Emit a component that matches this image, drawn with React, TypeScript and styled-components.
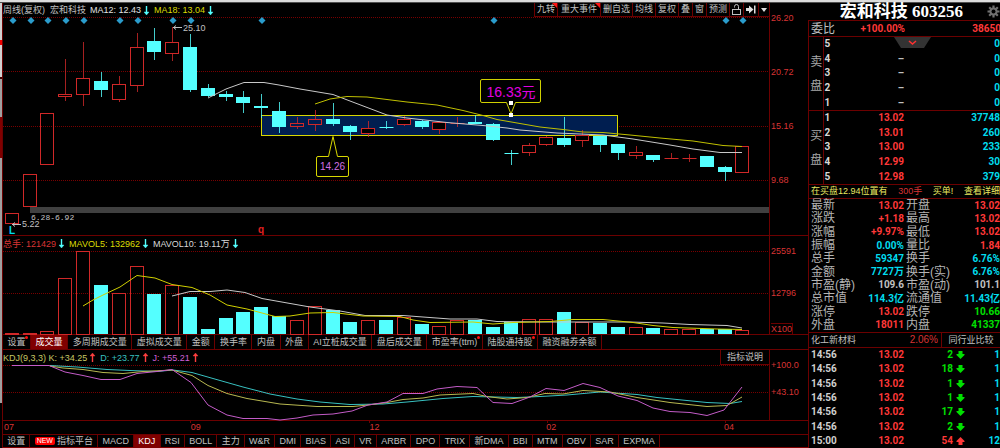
import React from "react";
import styled, { createGlobalStyle, css } from "styled-components";

const LINE = "#6c0000";
const RED = "#d83434";
const HOT = "#ff3838";
const CYAN = "#54ffff";
const AQUA = "#00dcee";
const GREEN = "#00e000";
const GREY = "#c0c0c0";
const YELLOW = "#dcdc00";

const SANS = `"Liberation Sans", "Noto Sans CJK SC", sans-serif`;
const DIGITS = `Roboto, "Noto Sans CJK SC", sans-serif`;

const GlobalStyle = createGlobalStyle`
  * { box-sizing: border-box; }
  body { margin: 0; background: #000; }
  button { font: inherit; color: inherit; margin: 0; border: 0; background: none; cursor: pointer; }
  table { border-collapse: collapse; width: 100%; }
  th, td { padding: 0; font-weight: inherit; }
`;

const Page = styled.div`
  display: flex;
  flex-direction: column;
  min-height: 100vh;
  overflow: hidden;
  background: #000;
  color: ${GREY};
  font: 9px/14px ${SANS};
`;

const TopStrip = styled.div`
  height: 3px;
  background: #dcdcdc;
  border-bottom: 1px solid #505050;
`;

const Workspace = styled.div`
  flex: 1;
  display: flex;
`;

const EdgeStrip = styled.div`
  width: 2px;
  background: linear-gradient(
    #d0d0d0 0 37px, #f00000 37px 42px, #d0d0d0 42px 74px, #400000 74px 76px,
    #a0a0a0 76px 114px, #800000 114px 155px, #a0a0a0 155px 400px, #000 400px
  );
`;

const Charts = styled.main`
  flex: 1;
  min-width: 0;
  display: flex;
  flex-direction: column;
  border-left: 1px solid ${LINE};
`;

const Pane = styled.section`
  display: flex;
  border-bottom: 1px solid ${LINE};
`;

const Plot = styled.div`
  flex: 1;
  min-width: 0;
`;

const PlotHeader = styled.header<{ $height: number }>`
  display: flex;
  justify-content: space-between;
  height: ${(p) => p.$height}px;
`;

const Readings = styled.div`
  display: flex;
  gap: 4px;
  white-space: nowrap;
`;

const Reading = styled.span<{ $color?: string }>`
  display: flex;
  align-items: center;
  gap: 2px;
  color: ${(p) => p.$color ?? GREY};
`;

const Canvas = styled.svg`
  display: block;
  width: 100%;
  height: auto;
  overflow: visible;
`;

const Axis = styled.div`
  width: 39px;
  display: flex;
  flex-direction: column;
  padding: 8px 0 0 1px;
  color: ${RED};
  border-left: 1px solid ${LINE};
`;

const Scale = styled.div<{ $gap: number }>`
  display: flex;
  flex-direction: column;
  gap: ${(p) => p.$gap}px;
`;

const Unit = styled.span`
  align-self: flex-start;
  margin-top: auto;
  line-height: 10px;
  border: 1px solid ${LINE};
  border-bottom: 0;
  border-left: 0;
`;

const Toolbar = styled.div`
  display: flex;
  white-space: nowrap;
`;

const ToolButton = styled.button<{ $flag?: boolean; $pad?: number }>`
  position: relative;
  padding: 0 ${(p) => p.$pad ?? 2}px;
  border: solid ${LINE};
  border-width: 0 0 1px 1px;
  line-height: 13px;
  display: flex;
  align-items: center;
  ${(p) =>
    p.$flag &&
    css`
      &::after {
        content: "";
        position: absolute;
        top: 0;
        right: 0;
        border-top: 5px solid #ff1414;
        border-left: 5px solid transparent;
      }
    `}
`;

const TabBar = styled.nav`
  border-bottom: 1px solid ${LINE};
`;

const IndicatorBar = styled.nav`
  border-top: 1px solid ${LINE};
  border-bottom: 1px solid #800000;
`;

const TabList = styled.div<{ $max: number }>`
  display: flex;
  max-width: ${(p) => p.$max}px;
  white-space: nowrap;
`;

const Tab = styled.button<{ $active?: boolean; $dot?: boolean }>`
  position: relative;
  flex: 1 1 auto;
  padding: 0 4px;
  border-right: 1px solid ${LINE};
  line-height: 14px;
  ${(p) => p.$active && `background: #800000; color: #fff;`}
  ${(p) =>
    p.$dot &&
    css`
      &::after {
        content: "";
        position: absolute;
        top: 1px;
        right: 2px;
        width: 3px;
        height: 3px;
        border-radius: 2px;
        background: #ff1010;
      }
    `}
`;

const IndicatorTab = styled(Tab)`
  line-height: 12px;
`;

const NewBadge = styled.span`
  display: inline-block;
  padding: 0 2px;
  margin-right: 2px;
  border-radius: 2px;
  background: #ff0000;
  color: #fff;
  font-size: 7px;
  line-height: 8px;
  vertical-align: 1px;
`;

const HelpButton = styled.button`
  width: 49px;
  padding: 0;
  border: solid ${LINE};
  border-width: 0 0 1px 1px;
  line-height: 13px;
`;

const Dates = styled.div`
  display: grid;
  grid-template-columns: 187fr 179fr 177fr 178fr 84fr;
  height: 13px;
  line-height: 13px;
  color: ${RED};
  padding-left: 1px;
`;

const Quote = styled.aside`
  width: 192px;
  display: flex;
  flex-direction: column;
`;

const Title = styled.h1`
  margin: 0;
  height: 17px;
  display: flex;
  align-items: center;
  justify-content: flex-end;
  gap: 24px;
  color: #fff;
  font: bold 17px/17px "Liberation Serif", "Noto Sans CJK SC", serif;
  white-space: nowrap;
`;

const GearButton = styled.button`
  display: flex;
  padding: 0;
`;

const QuoteBody = styled.div`
  flex: 1;
  border: solid ${LINE};
  border-width: 1px 0 0 1px;
  font: bold 10px/12px ${DIGITS};
  white-space: nowrap;
`;

const Ratio = styled.div`
  display: flex;
  height: 16px;
  align-items: center;
  border-bottom: 1px solid ${LINE};
  color: ${HOT};
`;

const Label = styled.span`
  font: 12px/14px ${SANS};
  color: ${GREY};
  padding-left: 2px;
  flex: 1;
`;

const RatioValue = styled.span`
  flex: 0 0 96px;
  text-align: right;
`;

const RatioPercent = styled.span`
  flex: 0 0 70px;
  text-align: right;
`;

const Book = styled.div`
  position: relative;
`;

const FoldButton = styled.button`
  position: absolute;
  left: 85px;
  top: 0;
  padding: 0;
  display: flex;
`;

const Levels = styled.table`
  height: 74px;
  border-bottom: 1px solid ${LINE};
  table-layout: fixed;
`;

const SideCell = styled.th`
  width: 14px;
  border-right: 1px solid ${LINE};
  font: 12px/24px ${SANS};
  color: #a8a8a8;
  white-space: normal;
  padding-left: 1px;
`;

const LevelCell = styled.th`
  width: 14px;
  text-align: left;
  padding-left: 1px;
  color: #d8d8d8;
`;

const NumCell = styled.td<{ $color: string; $width?: number }>`
  text-align: right;
  color: ${(p) => p.$color};
  ${(p) => p.$width && `width: ${p.$width}px;`}
`;

const Notice = styled.div`
  display: flex;
  justify-content: space-between;
  height: 14px;
  padding-left: 2px;
  border-bottom: 1px solid ${LINE};
  font: 9px/13px ${SANS};
  color: #e8e860;
`;

const NoticeLink = styled.a`
  color: inherit;
  text-decoration: none;
`;

const NoticeAmount = styled.span`
  color: ${RED};
`;

const Stats = styled.table`
  height: 133px;
  table-layout: fixed;
`;

const StatLabel = styled.th`
  width: 46px;
  overflow: visible;
  text-align: left;
  font: 12px/13px ${SANS};
  color: #b4b4b4;
  padding-left: 2px;
`;

const Industry = styled.div`
  display: flex;
  height: 16px;
  border: solid ${LINE};
  border-width: 1px 0;
  font: 9px/14px ${SANS};
`;

const IndustryName = styled.span`
  flex: 1;
  display: flex;
  justify-content: space-between;
  padding: 0 3px 0 2px;
  border-right: 1px solid ${LINE};
`;

const IndustryRise = styled.span`
  color: ${RED};
  font-size: 10px;
`;

const PeerButton = styled.button`
  width: 58px;
  padding: 0;
`;

const Trades = styled.table`
  height: 100px;
  table-layout: fixed;
`;

const TimeCell = styled.th`
  width: 40px;
  text-align: left;
  padding-left: 2px;
  color: #d0d0d0;
`;

const ArrowCell = styled.td`
  width: 14px;
  padding-left: 3px;
  svg {
    display: block;
  }
`;

/* ---------- data ---------- */

// [up, body top, body bottom, high, low, volume bar top, solid black body]
type Candle = [number, number, number, number, number, number, number?];
const candles: Candle[] = [
  [1, 213, 223, 213, 223, 333],
  [1, 174, 206, 174, 206, 333],
  [1, 113, 164, 113, 164, 331],
  [1, 94, 96, 59, 101, 278],
  [1, 78, 94, 42, 106, 251],
  [0, 81, 90, 72, 97, 285],
  [1, 84, 99, 76, 102, 293],
  [1, 47, 85, 33, 92, 266],
  [0, 41, 52, 28, 60, 294],
  [1, 42, 53, 27, 61, 285],
  [0, 47, 90, 34, 92, 297],
  [0, 88, 96, 84, 97, 329],
  [0, 94, 97, 91, 101, 318],
  [0, 97, 103, 91, 113, 312],
  [0, 106, 108, 94, 118, 307],
  [0, 111, 127, 102, 133, 316],
  [1, 123, 126, 117, 129, 320],
  [1, 119, 124, 110, 131, 306],
  [0, 119, 124, 103, 126, 310],
  [0, 126, 132, 125, 140, 322],
  [1, 128, 133, 121, 137, 320, 1],
  [0, 127, 127, 121, 129, 320],
  [1, 119, 124, 116, 126, 317, 1],
  [0, 121, 127, 120, 129, 324],
  [1, 122, 129, 121, 134, 326, 1],
  [1, 123, 123, 117, 127, 320],
  [0, 122, 124, 115, 124, 320],
  [0, 124, 140, 123, 141, 327],
  [0, 153, 153, 150, 165, 322],
  [1, 145, 152, 143, 156, 319],
  [1, 137, 144, 136, 146, 319],
  [0, 138, 145, 117, 147, 312],
  [1, 135, 140, 130, 147, 322],
  [0, 136, 145, 136, 152, 323],
  [0, 144, 153, 144, 160, 327],
  [1, 152, 155, 146, 159, 327],
  [0, 155, 160, 155, 162, 328],
  [1, 158, 158, 153, 158, 329],
  [1, 158, 158, 154, 162, 329],
  [0, 156, 167, 156, 167, 329],
  [0, 167, 172, 166, 181, 329],
  [1, 146, 172, 146, 172, 330],
];
const xAt = (i: number) => Math.round(11.8 + i * 17.82);

const eventMarks = [0, 1, 2, 3, 4, 6, 7, 9, 10, 14, 27, 40, 41];

const ma12 =
  "208,98 226,89 244,82.5 264,82.5 279,85 300,89 333,94.5 350,101 387,115 407,118 447,122.5 483,125.5 507,128 520,130 557,133 603,135 633,139 670,145 693,149 720,152.5 742,152.5";
const ma18 =
  "315,104 330,99 347,96.5 367,97 383,99 407,102 437,105 463,110.5 483,115.5 497,119.5 520,123.5 540,127 563,129.5 583,132 603,132.5 630,135 660,138 693,141 723,145.5 742,146.5";
const mavol5 =
  "83,306 93,300 103,295 120,287 137,275.5 155,278 172,284.5 192,287.5 210,295 227,305 247,309 262,313 275,316.5 290,316 310,313 333,312.5 363,316 400,316.5 413,320 430,322.5 473,322 493,324 513,322.5 550,321.5 573,319.5 603,319.5 633,322.5 653,325.5 673,327.5 717,329 742,329.5";
const mavol10 =
  "172,296 190,291.5 210,291.5 227,290 245,292.5 262,298.5 310,307 340,311 365,315.5 403,315.5 423,317 450,319 477,319 497,321.5 540,322 630,322 663,323 690,324.5 727,325.5 742,328";
const lineJ =
  "12,365.5 49,365.5 65,372 83,375.5 101,379.5 120,379.5 137,373.5 157,371.5 172,369.5 191,382.5 208,405 227,415 243,418.5 267,418.5 280,420 297,418 313,415 333,414 352,411 368,405 387,402 403,393.5 423,393.5 437,389 457,386.5 477,387.5 487,397 493,402.5 512,403.5 530,397 546,388.5 564,390.5 583,383.5 600,387.5 618,396 637,400.5 653,408 670,411.5 690,412.5 707,415.5 724,410 742,387";
const lineK =
  "50,366 63,368 83,369.5 103,372.5 123,373.5 143,371.5 172,370 192,375.5 208,385.5 227,393.5 247,398.5 280,404 317,406.5 353,406.5 368,405 387,402.5 403,399.5 423,398 440,395 473,393.5 487,396.5 507,399 527,397.5 545,393.5 563,394 583,390.5 610,392 637,397.5 670,402.5 707,406.5 727,405.5 742,397";
const lineD =
  "50,365.5 77,367 107,369.5 130,370.5 157,371.5 173,370 192,372.5 213,378.5 243,387 270,394 297,399 320,402 350,404.5 383,404 407,402 443,398.5 473,396.5 517,397.5 540,396.5 567,395 600,392 637,394.5 657,397.5 707,402.5 730,403.5 742,401.5";

const volumeTabs: [string, boolean?][] = [
  ["设置", true], ["成交量"], ["多周期成交量"], ["虚拟成交量"], ["金额"], ["换手率"], ["内盘"], ["外盘"],
  ["AI立桩成交量"], ["盘后成交量"], ["市盈率(ttm)", true], ["陆股通持股", true], ["融资融券余额"],
];
const indicatorTabs = [
  "MACD", "KDJ", "RSI", "BOLL", "主力", "W&R", "DMI", "BIAS", "ASI", "VR", "ARBR", "DPO", "TRIX",
  "新DMA", "BBI", "MTM", "OBV", "SAR", "EXPMA",
];

const asks = [["5", "", "0"], ["4", "–", "0"], ["3", "–", "0"], ["2", "–", "0"], ["1", "–", "0"]];
const bids = [
  ["1", "13.02", "37748"], ["2", "13.01", "260"], ["3", "13.00", "233"], ["4", "12.99", "30"], ["5", "12.98", "379"],
];
const stats: [string, string, string, string, string, string][] = [
  ["最新", "13.02", HOT, "开盘", "13.02", HOT],
  ["涨跌", "+1.18", HOT, "最高", "13.02", HOT],
  ["涨幅", "+9.97%", HOT, "最低", "13.02", HOT],
  ["振幅", "0.00%", AQUA, "量比", "1.84", HOT],
  ["总手", "59347", AQUA, "换手", "6.76%", AQUA],
  ["金额", "7727万", AQUA, "换手(实)", "6.76%", AQUA],
  ["市盈(静)", "109.6", GREY, "市盈(动)", "101.1", GREY],
  ["总市值", "114.3亿", AQUA, "流通值", "11.43亿", AQUA],
  ["涨停", "13.02", HOT, "跌停", "10.66", GREEN],
  ["外盘", "18011", HOT, "内盘", "41337", GREEN],
];
const trades: [string, string, boolean, string][] = [
  ["14:56", "2", false, "1"], ["14:56", "18", false, "1"], ["14:56", "1", false, "1"], ["14:56", "1", false, "1"],
  ["14:56", "17", false, "1"], ["14:56", "2", false, "1"], ["15:00", "54", true, "12"],
];

/* ---------- drawings ---------- */

const Trend = ({ up }: { up?: boolean }) => (
  <svg width="7" height="9" viewBox="0 0 7 9" aria-hidden="true">
    <path
      d={up ? "M3 9V3H1L3.5 0 6 3H4V9Z" : "M3 0V6H1L3.5 9 6 6H4V0Z"}
      fill={up ? "#ff4040" : CYAN}
      stroke={up ? "#ff4040" : CYAN}
      strokeWidth="0.4"
    />
  </svg>
);

const TradeArrow = ({ up }: { up: boolean }) => (
  <svg width="9" height="8" viewBox="0 0 9 8" aria-hidden="true">
    <path
      d={up ? "M4.5 0L8.5 4V5H6.5V8H2.5V5H0.5V4Z" : "M4.5 8L8.5 4V3H6.5V0H2.5V3H0.5V4Z"}
      fill={up ? HOT : GREEN}
    />
  </svg>
);

const Grid = ({ ys }: { ys: number[] }) => (
  <g stroke="#780000" strokeDasharray="1 1">
    {ys.map((y) => (
      <line key={y} x1="3" x2="769" y1={y + 0.5} y2={y + 0.5} />
    ))}
  </g>
);

const PriceChart = () => (
  <Canvas viewBox="3 17 766 218" role="img" aria-label="周线">
    <Grid ys={[17, 71, 126, 180]} />
    <rect x="30" y="207" width="739" height="6" fill="#404040" />
    <rect x="261.5" y="115.5" width="356" height="20" fill="#001e50" stroke="#d8d800" />
    {candles.map(([up, top, bottom, high, low, , solid], i) => {
      const x = xAt(i);
      const color = up ? "#d02828" : CYAN;
      return (
        <g key={i} stroke={color}>
          {high < top && <line x1={x + 0.5} x2={x + 0.5} y1={high} y2={top} opacity="0.8" />}
          {low > bottom && <line x1={x + 0.5} x2={x + 0.5} y1={bottom} y2={low} opacity="0.8" />}
          {top === bottom ? (
            <line x1={x - 6.5} x2={x + 7.5} y1={top + 0.5} y2={top + 0.5} />
          ) : up ? (
            <rect x={x - 6.5} y={top + 0.5} width="13" height={bottom - top} fill={solid ? "#000" : "none"} />
          ) : (
            <rect x={x - 7} y={top} width="14" height={bottom - top} fill={CYAN} stroke="none" />
          )}
        </g>
      );
    })}
    <polyline points={ma12} fill="none" stroke="#c8c8c8" />
    <polyline points={ma18} fill="none" stroke="#c0c000" />
    {eventMarks.map((i) => (
      <path key={i} d={`M${xAt(i) + 1} 17l3.5 3.5-3.5 3.5-3.5-3.5z`} fill="#2a9ccc" />
    ))}
    <path
      d="M318 156.5H328.5L333 136.5 337.5 156.5H347Q348.5 156.5 348.5 158V175Q348.5 176.5 347 176.5H318Q316.5 176.5 316.5 175V158Q316.5 156.5 318 156.5Z"
      fill="#000"
      stroke="#d8d800"
    />
    <text x="332.5" y="170" textAnchor="middle" fontSize="10" fill="#d070e0">14.26</text>
    <path
      d="M482 79.5H539Q540.5 79.5 540.5 81V101Q540.5 102.5 539 102.5H515.5L511 114 506.5 102.5H482Q480.5 102.5 480.5 101V81Q480.5 79.5 482 79.5Z"
      fill="#000"
      stroke="#d0d000"
    />
    <text x="511" y="97" textAnchor="middle" fontSize="14" fill="#e000e0">16.33元</text>
    <rect x="509" y="101" width="4" height="4" fill="#fff" />
    <rect x="509" y="113" width="4" height="4" fill="#fff" />
    <g stroke={GREY} fill="none">
      <path d="M173 27.5H182M176 25.5L173.5 27.5L176 29.5" />
      <path d="M12 224.5H21M15 222.5L12.5 224.5L15 226.5" />
    </g>
    <g fill={GREY} fontSize="9">
      <text x="183" y="31">25.10</text>
      <text x="22" y="227">5.22</text>
      <text x="31" y="220" fontSize="8" fontFamily="Liberation Mono, monospace">6.28-6.92</text>
    </g>
    <g fontSize="10" fontWeight="bold">
      <text x="9" y="234" fill={AQUA}>L</text>
      <text x="258" y="233" fill="#e02020">q</text>
    </g>
  </Canvas>
);

const VolumeChart = () => (
  <Canvas viewBox="3 251 766 83" role="img" aria-label="成交量">
    <Grid ys={[251, 293]} />
    {candles.map(([up, , , , , top], i) =>
      up ? (
        <rect key={i} x={xAt(i) - 6.5} y={top + 0.5} width="13" height={334 - top} fill="none" stroke="#d02828" />
      ) : (
        <rect key={i} x={xAt(i) - 7} y={top} width="14" height={334 - top} fill={CYAN} />
      )
    )}
    <polyline points={mavol10} fill="none" stroke="#c8c8c8" />
    <polyline points={mavol5} fill="none" stroke="#d0d000" />
  </Canvas>
);

const KdjChart = () => (
  <Canvas viewBox="3 365 766 55" role="img" aria-label="KDJ">
    <Grid ys={[365, 392]} />
    <g fill="none">
      <polyline points={lineD} stroke="#38c0c0" />
      <polyline points={lineK} stroke="#b8b850" />
      <polyline points={lineJ} stroke="#c45cc8" />
    </g>
    <path d="M190.5 420v3M369.5 420v3M547.5 420v3M725.5 420v3" stroke={LINE} />
  </Canvas>
);

const LevelTable = ({ side, rows, price }: { side: string; rows: string[][]; price: string }) => (
  <Levels>
    <tbody>
      {rows.map(([level, value, amount], i) => (
        <tr key={level}>
          {i === 0 && <SideCell rowSpan={5}>{side}</SideCell>}
          <LevelCell>{level}</LevelCell>
          <NumCell $color={price} $width={67}>{value}</NumCell>
          <NumCell $color={AQUA}>{amount}</NumCell>
        </tr>
      ))}
    </tbody>
  </Levels>
);

export default function App() {
  return (
    <Page>
      <GlobalStyle />
      <TopStrip />
      <Workspace>
        <EdgeStrip />
        <Charts>
          <Pane>
            <Plot>
              <PlotHeader $height={14}>
                <Readings>
                  <Reading>周线(复权)&nbsp; 宏和科技</Reading>
                  <Reading $color="#e0e0e0">MA12: 12.43<Trend /></Reading>
                  <Reading $color={YELLOW}>MA18: 13.04<Trend /></Reading>
                </Readings>
                <Toolbar>
                  <ToolButton $flag>九转</ToolButton>
                  <ToolButton $flag $pad={3}>重大事件</ToolButton>
                  <ToolButton>删自选</ToolButton>
                  <ToolButton>均线</ToolButton>
                  <ToolButton>复权</ToolButton>
                  <ToolButton>叠</ToolButton>
                  <ToolButton>窗</ToolButton>
                  <ToolButton>预测</ToolButton>
                  <ToolButton aria-label="锁定">
                    <svg width="9" height="11" viewBox="0 0 9 11" fill="none" stroke={GREY}>
                      <rect x="0.5" y="5.5" width="8" height="5" />
                      <path d="M2.5 3.5V2.5Q2.5 0.5 4.5 0.5T6.5 2.5V5.5" />
                    </svg>
                  </ToolButton>
                  <ToolButton aria-label="最新">
                    <svg width="10" height="9" viewBox="0 0 10 9" fill="#e0e0e0">
                      <path d="M0 3H3V0.5L7.5 4.5 3 8.5V6H0ZM8 0.5H9.5V8.5H8Z" />
                    </svg>
                  </ToolButton>
                  <ToolButton aria-label="更多">
                    <svg width="6" height="4" viewBox="0 0 6 4" fill="#e0e0e0">
                      <path d="M0 0H6L3 4Z" />
                    </svg>
                  </ToolButton>
                </Toolbar>
              </PlotHeader>
              <PriceChart />
            </Plot>
            <Axis>
              <Scale $gap={40}>
                <span>26.20</span>
                <span>20.72</span>
                <span>15.16</span>
                <span>9.68</span>
              </Scale>
            </Axis>
          </Pane>

          <Pane>
            <Plot>
              <PlotHeader $height={15}>
                <Readings>
                  <Reading $color={RED}>总手: 121429<Trend /></Reading>
                  <Reading $color={YELLOW}>MAVOL5: 132962<Trend /></Reading>
                  <Reading $color="#d8d8d8">MAVOL10: 19.11万<Trend /></Reading>
                </Readings>
              </PlotHeader>
              <VolumeChart />
            </Plot>
            <Axis>
              <Scale $gap={28}>
                <span>25591</span>
                <span>12796</span>
              </Scale>
              <Unit>X100</Unit>
            </Axis>
          </Pane>

          <TabBar>
            <TabList $max={599}>
              {volumeTabs.map(([name, dot]) => (
                <Tab key={name} $dot={dot} $active={name === "成交量"}>{name}</Tab>
              ))}
            </TabList>
          </TabBar>

          <Pane>
            <Plot>
              <PlotHeader $height={15}>
                <Readings>
                  <Reading $color="#c8c864">KDJ(9,3,3) K: +34.25<Trend up /></Reading>
                  <Reading $color="#38c0c0">D: +23.77<Trend up /></Reading>
                  <Reading $color="#d060d8">J: +55.21<Trend up /></Reading>
                </Readings>
                <HelpButton>指标说明</HelpButton>
              </PlotHeader>
              <KdjChart />
            </Plot>
            <Axis>
              <Scale $gap={13}>
                <span>+100.0</span>
                <span>+43.10</span>
              </Scale>
            </Axis>
          </Pane>
          <Dates>
            <span>07</span>
            <span>09</span>
            <span>12</span>
            <span>02</span>
            <span>04</span>
          </Dates>
          <IndicatorBar>
            <TabList $max={657}>
              <IndicatorTab>设置</IndicatorTab>
              <IndicatorTab><NewBadge>NEW</NewBadge>指标平台</IndicatorTab>
              {indicatorTabs.map((name) => (
                <IndicatorTab key={name} $active={name === "KDJ"}>{name}</IndicatorTab>
              ))}
            </TabList>
          </IndicatorBar>
        </Charts>

        <Quote>
          <Title>
            宏和科技 603256
            <GearButton aria-label="设置">
              <svg width="13" height="13" viewBox="0 0 13 13">
                <g stroke="#707070" strokeWidth="2.2">
                  <path d="M6.5 0.5V12.5M0.5 6.5H12.5M2.2 2.2L10.8 10.8M10.8 2.2L2.2 10.8" />
                </g>
                <circle cx="6.5" cy="6.5" r="4" fill="#707070" />
                <circle cx="6.5" cy="6.5" r="2" fill="#000" />
              </svg>
            </GearButton>
          </Title>
          <QuoteBody>
            <Ratio>
              <Label>委比</Label>
              <RatioPercent>+100.00%</RatioPercent>
              <RatioValue>38650</RatioValue>
            </Ratio>
            <Book>
              <LevelTable side="卖 盘" rows={asks} price={GREY} />
              <LevelTable side="买 盘" rows={bids} price={HOT} />
              <FoldButton aria-label="收起">
                <svg width="37" height="11" viewBox="0 0 37 11">
                  <path d="M0 0H37L30 11H7Z" fill="#333" />
                  <path d="M15 4L18.5 7 22 4" fill="none" stroke="#ff3030" strokeWidth="1.5" />
                </svg>
              </FoldButton>
            </Book>
            <Notice>
              <span>在买盘12.94位置有</span>
              <NoticeAmount>300手</NoticeAmount>
              <span>买单!</span>
              <NoticeLink href="#detail">查看详细</NoticeLink>
            </Notice>
            <Stats>
              <tbody>
                {stats.map(([a, av, ac, b, bv, bc]) => (
                  <tr key={a}>
                    <StatLabel>{a}</StatLabel>
                    <NumCell $color={ac} $width={49}>{av}</NumCell>
                    <StatLabel>{b}</StatLabel>
                    <NumCell $color={bc}>{bv}</NumCell>
                  </tr>
                ))}
              </tbody>
            </Stats>
            <Industry>
              <IndustryName>
                化工新材料
                <IndustryRise>2.06%</IndustryRise>
              </IndustryName>
              <PeerButton>同行业比较</PeerButton>
            </Industry>
            <Trades>
              <tbody>
                {trades.map(([time, amount, up, count], i) => (
                  <tr key={i}>
                    <TimeCell>{time}</TimeCell>
                    <NumCell $color={HOT} $width={55}>13.02</NumCell>
                    <NumCell $color={up ? HOT : GREEN} $width={49}>{amount}</NumCell>
                    <ArrowCell><TradeArrow up={up} /></ArrowCell>
                    <NumCell $color={AQUA}>{count}</NumCell>
                  </tr>
                ))}
              </tbody>
            </Trades>
          </QuoteBody>
        </Quote>
      </Workspace>
    </Page>
  );
}
